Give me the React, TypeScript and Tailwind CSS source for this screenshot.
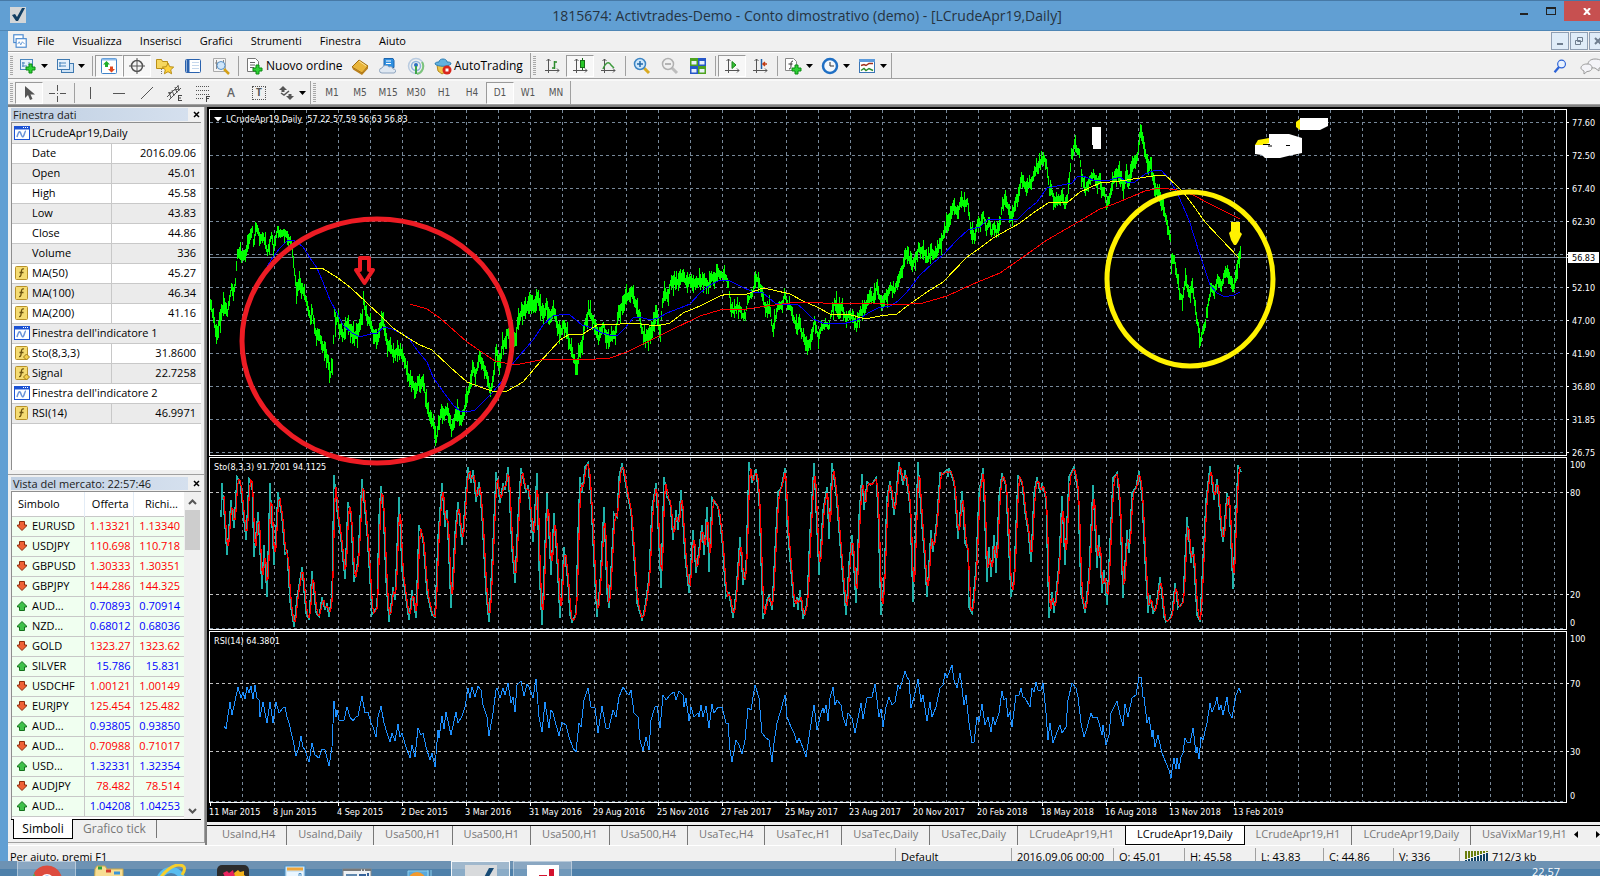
import type { ReactNode } from 'react'

type Point = [number, number]

const toPoints = (text: string): Point[] =>
  text.trim().split(/\s+/).map((pair) => pair.split(',').map(Number) as Point)

const toPath = (points: Point[]) => points.map(([x, y]) => `${x},${y}`).join(' ')

// midline of the daily bars, in pane pixels
const PRICE = toPoints(`
0,192 3,208 6,225 9,212 13,195 17,203 21,177 23,185 25,172 27,142 31,148 35,145 38,132 42,120 43,133 46,118 50,128 53,127 57,142 61,125
63,137 67,120 70,125 73,122 77,125 81,135 83,152 86,180 90,173 93,183 97,195 100,210 102,202 105,222 109,228 113,237 116,243 118,252 120,265 122,255
124,202 125,212 127,208 130,222 133,225 137,212 140,222 144,225 148,223 152,202 153,192 157,208 160,215 163,222 167,232 169,218 172,210 175,225 178,235
182,243 187,242 192,243 195,255 198,267 202,272 205,282 208,272 213,273 216,292 219,305 223,315 226,328 228,315 231,302 234,305 237,298 241,322 243,312
246,302 250,312 253,302 257,288 259,275 262,258 265,265 269,248 273,255 276,265 280,282 283,265 286,242 289,252 292,235 295,233 297,222 302,228 305,230
307,213 311,202 314,202 318,193 323,197 327,188 330,198 333,208 336,195 339,208 343,200 347,215 350,225 353,215 357,223 360,238 363,248 366,257 369,242
372,235 374,215 378,202 382,208 386,217 388,230 393,215 396,228 400,228 405,225 407,208 412,195 415,185 418,187 422,183 426,195 429,208 433,225 438,230
442,215 446,205 450,222 452,192 454,182 457,188 460,172 465,173 470,167 473,168 477,172 482,170 485,175 492,170 498,175 503,167 510,164 515,168 518,173
520,193 523,202 527,195 532,205 535,205 537,192 542,182 546,168 549,172 551,185 555,197 559,198 562,218 565,208 568,195 572,195 574,183 577,195 580,197
583,208 587,218 589,217 593,227 596,238 599,232 602,222 604,212 608,228 611,217 615,213 618,218 621,202 624,193 627,197 631,197 635,208 639,205 643,207
646,217 650,202 654,200 657,190 662,188 666,178 669,187 673,193 676,185 680,178 684,180 687,172 691,162 694,150 697,143 702,157 705,147 709,138 713,142
717,148 721,142 723,147 728,138 732,128 736,117 740,103 743,98 747,103 751,90 754,95 757,92 759,105 761,127 764,127 767,112 770,115 773,105 776,120
779,110 781,122 783,117 786,122 790,110 792,93 795,92 798,98 802,110 805,92 808,85 811,70 815,75 819,75 823,67 826,57 830,53 834,48 837,60 839,83 841,78
844,93 848,90 852,87 854,95 857,88 859,68 861,45 864,35 867,42 869,42 871,65 875,80 879,70 883,65 887,73 889,67 892,80 894,83 896,97 900,83 903,70
907,62 910,67 913,78 916,65 918,70 922,58 925,50 927,47 929,27 930,23 934,37 937,55 940,55 942,67 946,82 949,83 953,98 956,112 960,128 961,150 964,150
967,168 969,185 972,188 975,172 979,182 982,178 984,192 987,212 990,232 992,222 995,212 998,192 1001,177 1004,182 1007,168 1011,177 1014,165 1017,160
1020,172 1023,178 1026,162 1028,150 1030,145`)

const MA50 = `57,157 63,147 70,138 77,131 82,130 87,132 93,137 100,148 107,158 115,177 120,190 127,203 133,215 142,223 150,227 160,224 167,223 174,217 182,219
190,223 198,227 207,240 217,252 223,267 232,280 243,295 250,301 257,302 265,300 273,292 283,282 292,271 300,257 310,245 323,230 333,215 343,206 355,204
360,205 372,215 383,218 392,223 403,226 408,225 415,218 423,208 430,207 440,210 448,208 457,203 470,198 480,194 490,183 500,175 508,171 518,170 530,176
543,182 553,183 565,193 573,195 587,194 593,199 603,209 613,213 633,214 647,210 660,202 668,198 680,196 688,191 697,182 710,165 723,153 733,145 747,130
758,120 770,117 778,109 800,109 808,109 817,100 827,92 837,78 847,76 862,73 868,66 873,66 883,70 900,70 910,67 918,73 925,72 935,64 943,61 951,60
960,70 969,87 979,110 990,145 1000,175 1007,183 1015,187 1024,185 1030,182`

const MA100 = `100,158 112,158 128,168 140,177 157,193 172,207 183,218 198,228 210,235 222,240 240,257 257,272 273,278 285,282 297,281 313,272 330,252 350,230
358,225 373,224 387,215 410,214 423,213 447,216 460,213 473,203 490,196 510,186 517,184 537,184 553,178 563,180 580,184 593,191 607,197 620,204 638,204
655,209 670,206 687,204 697,196 717,182 733,172 757,147 770,138 783,128 810,113 823,103 838,93 858,92 870,82 890,73 910,71 930,68 943,66 955,65 966,75
973,82 983,95 995,112 1010,128 1029,148`

const MA200 = `200,194 217,199 230,208 257,232 285,251 300,254 310,254 330,250 350,249 373,250 400,248 417,242 437,232 457,222 490,206 510,200 537,199 557,196
580,193 603,192 623,194 663,193 687,195 713,193 737,186 763,174 790,163 813,147 837,130 863,115 890,99 904,94 935,81 950,78 967,80 983,85 1000,94 1030,109`

// oscillator samples, three units to a pixel; each run starts at its own x origin
const STO: [number, string][] = [
  [0, `64,200 67,98 80,315 94,150 102,235 112,82 120,95 138,270 148,88 155,95 163,320 173,185 185,418 193,285 202,440 211,98 223,345 233,125 247,205 255,315
262,300 270,455 282,530 292,440 307,350 318,490 328,510 337,362 348,490 356,500 365,440 375,480 380,460 388,500 395,430 403,75 412,180 423,270 434,388
444,155 452,200 463,395 475,330 487,88 500,250 510,390 517,495 525,480 530,470 537,200 544,108 550,160 558,390 566,515 578,410 584,450 596,142 607,360
618,450 628,510 637,420 647,505 658,225 670,270 680,430 690,470 697,495 706,500 715,260 727,100 736,230 742,180 753,475 764,250 773,155 785,285 797,120
804,50 812,100 819,60 828,155 836,95 846,200 857,430 868,515 878,280 888,65 900,160 908,98 914,120 923,52 935,300 946,400 953,200 962,55 972,100 978,130
985,105 1000,275 1010,68 1018,350 1027,525 1042,130 1052,375 1061,190 1070,330 1080,505 1093,290 1103,400 1110,495 1117,517 1127,490 1135,250 1141,80
1147,130 1155,50 1164,38 1172,150 1185,400 1192,500 1200,400 1212,170 1220,430 1228,475 1241,190 1250,200 1258,80 1267,40 1280,130 1292,190 1300,280
1310,460 1325,510 1336,470 1347,380 1355,170 1368,98 1382,415 1391,82 1400,140 1410,155 1418,270 1427,180 1434,240 1443,120 1455,320 1468,430 1478,240
1489,370 1505,225 1513,315 1521,172 1528,365 1537,145 1546,160 1555,170`],
  [1440, `127,270 138,440 146,430 158,505 168,430 179,262 190,405 198,350 206,35 217,100 227,58 237,150 250,508 260,450 268,438 275,480 285,300 295,125
304,115 314,55 322,220 335,400 342,470 350,440 353,480 359,420 370,508 380,460 390,250 403,38 417,375 428,180 440,112 446,268 457,40 467,130 480,280
497,495 507,340 517,255 528,458 537,200 545,72 553,180 561,95 573,105 587,85 594,180 603,495 612,400 620,140 631,92 642,195 656,35 668,105 675,60 690,170
698,455 714,35 725,230 733,300 742,440 752,240 760,305 770,200 779,68 790,72 800,60 803,80 808,55 822,100 833,268 845,122 855,280 863,300 868,470 877,490
887,350 897,130 908,55 920,395 928,290 933,380 941,255 948,370 956,140 965,68 978,110 992,440 1001,380 1013,75 1027,100 1035,190 1045,240 1053,335
1063,130 1070,80 1080,130 1087,100 1097,150 1106,505 1115,425 1123,490 1137,340 1145,138 1154,345 1168,80 1181,50 1193,130 1204,430 1216,490 1228,370
1240,105 1252,355 1258,255 1267,430 1273,360 1282,465 1290,280 1298,85 1312,68 1320,180 1330,445 1340,240 1346,310 1357,130 1368,110 1377,62 1387,140
1395,330 1404,490 1410,435 1418,490 1428,470 1439,380 1452,500 1457,515 1470,505`],
  [2700, `215,490 224,400 235,475 248,455 260,200 274,340 279,290 290,495 299,515 308,330 318,150 331,48 342,150 352,88 362,240 370,275 380,130 388,150
398,418 407,180 415,46 422,66`],
]

const RSI: [number, string][] = [
  [0, `73,828 79,838 91,757 97,795 113,710 122,745 129,725 134,748 142,710 147,730 153,707 160,748 166,706 172,745 177,750 181,800 188,755 200,818 211,755
218,818 229,757 238,790 249,775 256,770 262,800 268,820 278,870 288,918 297,890 302,857 308,890 314,900 328,935 337,878 345,915 356,925 366,898 376,900
388,948 395,890 403,752 408,800 412,780 418,810 432,810 440,770 450,800 458,812 468,800 475,798 487,738 495,790 505,785 513,820 520,830 528,860 535,800
544,768 552,820 560,850 570,875 576,850 584,872 593,822 601,860 607,850 618,890 629,925 635,885 645,920 654,835 663,855 669,850 678,890 690,930 697,908
706,952 713,840 718,865 725,797 731,838 737,785 752,855 768,785 775,820 785,798 795,770 805,715 809,745 815,712 826,740 833,708 842,720 850,765 860,800
868,858 878,790 887,720 892,715 900,745 908,715 915,735 923,700 933,760 939,740 944,787 952,705 962,692 972,738 980,702 987,712 1000,745 1009,688
1018,800 1027,845 1035,757 1046,835 1052,780 1060,790 1077,858 1086,815 1097,825 1108,860 1120,895 1127,905 1137,820 1143,830 1153,750 1164,715 1172,770
1184,775 1193,850 1207,768 1218,835 1228,835 1240,780 1247,800 1257,740 1268,710 1280,730 1287,735 1293,720 1303,790 1313,800 1320,870 1330,903 1339,860
1346,900 1353,810 1365,770 1371,768 1380,835 1390,735 1398,750 1410,735 1422,725 1428,750 1438,722 1448,735 1452,770 1458,745 1466,812 1473,770 1482,800
1493,790 1498,800 1504,765 1508,800 1518,768 1526,835 1535,762 1543,790 1553,770`],
  [1440, `127,770 137,820 143,820 150,900 157,935 167,870 177,885 186,912 195,870 203,775 212,780 225,705 236,745 246,850 258,865 268,870 275,935 283,880
292,820 302,780 314,735 322,800 333,830 343,850 350,880 357,865 368,895 377,922 388,860 395,800 402,765 411,840 422,790 428,775 433,790 438,765 444,812
450,745 459,712 465,765 472,750 482,765 488,800 497,828 505,790 515,805 525,850 537,790 544,760 549,808 560,745 575,740 584,703 592,750 598,800 603,778
608,830 617,770 627,740 635,765 645,755 654,705 660,718 674,662 680,680 688,690 694,775 705,730 714,688 723,755 730,735 741,812 749,755 757,800 768,770
780,715 788,705 795,670 802,685 810,660 817,645 822,690 832,715 839,668 844,690 851,765 857,735 866,820 875,880 882,875 890,800 897,815 906,762 915,825
923,800 932,845 938,800 946,825 957,790 965,722 972,750 978,745 984,800 990,785 997,830 1007,735 1018,735 1022,715 1030,740 1036,745 1049,770 1057,715
1063,725 1068,697 1075,720 1083,720 1090,700 1097,790 1105,870 1111,820 1120,880 1130,845 1140,825 1146,850 1157,830 1165,750 1177,700 1187,715 1195,740
1203,820 1213,860 1222,835 1233,790 1240,805 1252,800 1258,820 1266,855 1270,825 1278,885 1287,855 1293,790 1303,770 1312,752 1320,795 1329,828 1336,762
1344,800 1355,745 1367,735 1377,680 1382,680 1388,740 1393,740 1400,820 1408,800 1415,860 1420,840 1425,890 1434,855 1447,910 1458,940 1466,960 1472,985`],
  [2700, `217,960 222,925 227,958 231,925 236,958 242,920 250,910 254,865 260,875 270,880 278,835 288,910 292,890 298,928 303,860 308,870 320,820 331,760
337,785 345,765 351,742 358,780 363,765 368,795 380,740 388,785 397,805 408,735 418,715 422,728`],
]

const joinRuns = (runs: [number, string][], shiftY: number): Point[] =>
  runs.flatMap(([origin, text]) =>
    toPoints(text).map(([x, y]): Point => [Math.round((x + origin) / 3) - 10, Math.round(y / 3) - shiftY]),
  )

const valueAt = (points: Point[], x: number) => {
  const i = points.findIndex(([px]) => px >= x)
  if (i <= 0) return points[i === 0 ? 0 : points.length - 1][1]
  const [x0, y0] = points[i - 1]
  const [x1, y1] = points[i]
  return y0 + ((y1 - y0) * (x - x0)) / (x1 - x0 || 1)
}

const hash = (n: number) => {
  const v = Math.sin(n * 12.9898) * 43758.5453
  return v - Math.floor(v)
}

const priceBars = () => {
  let d = ''
  for (let x = 0; x <= 1030; x++) {
    const mid = valueAt(PRICE, x)
    const reach = x > 455 && x < 720 ? 2 : 3
    const high = Math.round(mid - reach - hash(x) * hash(x + 7) * 13)
    const low = Math.round(mid + reach + hash(x + 31) * hash(x + 3) * 13)
    d += `M${x} ${high}V${low}`
  }
  return d
}

const smooth = (points: Point[]): Point[] => {
  const result: Point[] = []
  for (let x = points[0][0] + 2; x <= 1030; x++) {
    const y = (valueAt(points, x - 2) + valueAt(points, x - 1) + valueAt(points, x)) / 3
    result.push([x, Math.round(y)])
  }
  return result
}

const stochastic = joinRuns(STO, 8)
const rsi = joinRuns(RSI, 182)

const priceScale = ['77.60', '72.50', '67.40', '62.30', '', '52.10', '47.00', '41.90', '36.80', '31.85', '26.75']

const dates = [
  '11 Mar 2015', '8 Jun 2015', '4 Sep 2015', '2 Dec 2015', '3 Mar 2016', '31 May 2016', '29 Aug 2016', '25 Nov 2016', '27 Feb 2017',
  '25 May 2017', '23 Aug 2017', '20 Nov 2017', '20 Feb 2018', '18 May 2018', '16 Aug 2018', '13 Nov 2018', '13 Feb 2019',
]

const dataRows: { label: string; value?: string; icon?: 'window' | 'fx' | 'fxd' }[] = [
  { label: 'LCrudeApr19,Daily', icon: 'window' },
  { label: 'Date', value: '2016.09.06' },
  { label: 'Open', value: '45.01' },
  { label: 'High', value: '45.58' },
  { label: 'Low', value: '43.83' },
  { label: 'Close', value: '44.86' },
  { label: 'Volume', value: '336' },
  { label: 'MA(50)', value: '45.27', icon: 'fx' },
  { label: 'MA(100)', value: '46.34', icon: 'fx' },
  { label: 'MA(200)', value: '41.16', icon: 'fx' },
  { label: "Finestra dell'indicatore 1", icon: 'window' },
  { label: 'Sto(8,3,3)', value: '31.8600', icon: 'fxd' },
  { label: 'Signal', value: '22.7258', icon: 'fxd' },
  { label: "Finestra dell'indicatore 2", icon: 'window' },
  { label: 'RSI(14)', value: '46.9971', icon: 'fx' },
]

const quotes: [string, string, string, boolean][] = [
  ['EURUSD', '1.13321', '1.13340', false],
  ['USDJPY', '110.698', '110.718', false],
  ['GBPUSD', '1.30333', '1.30351', false],
  ['GBPJPY', '144.286', '144.325', false],
  ['AUD...', '0.70893', '0.70914', true],
  ['NZD...', '0.68012', '0.68036', true],
  ['GOLD', '1323.27', '1323.62', false],
  ['SILVER', '15.786', '15.831', true],
  ['USDCHF', '1.00121', '1.00149', false],
  ['EURJPY', '125.454', '125.482', false],
  ['AUD...', '0.93805', '0.93850', true],
  ['AUD...', '0.70988', '0.71017', false],
  ['USD...', '1.32331', '1.32354', true],
  ['AUDJPY', '78.482', '78.514', false],
  ['AUD...', '1.04208', '1.04253', true],
]

const chartTabs = [
  'UsaInd,H4', 'UsaInd,Daily', 'Usa500,H1', 'Usa500,H1', 'Usa500,H1', 'Usa500,H4', 'UsaTec,H4', 'UsaTec,H1', 'UsaTec,Daily', 'UsaTec,Daily',
  'LCrudeApr19,H1', 'LCrudeApr19,Daily', 'LCrudeApr19,H1', 'LCrudeApr19,Daily', 'UsaVixMar19,H1',
]

function Icon({ children, size = 18 }: { children: ReactNode; size?: number }) {
  return (
    <svg width={size} height={size} viewBox="0 0 18 18" fill="none" className="shrink-0" aria-hidden="true">
      {children}
    </svg>
  )
}

function ToolButton({ label, pressed, caret, children }: { label: string; pressed?: boolean; caret?: boolean; children: ReactNode }) {
  return (
    <button
      type="button"
      aria-label={label}
      className={`flex h-[22px] items-center justify-center border ${caret ? 'w-[37px] gap-1' : 'w-7'} ${
        pressed ? 'border-t-[#9a9a9a] border-l-[#9a9a9a] border-r-white border-b-white bg-[#f7f7f7]' : 'border-transparent'
      }`}
    >
      {children}
      {caret && <Caret />}
    </button>
  )
}

function Caret() {
  return (
    <svg width="7" height="4" viewBox="0 0 7 4" className="shrink-0" aria-hidden="true">
      <path d="M0 0H7L3.5 4Z" fill="#000" />
    </svg>
  )
}

function Separator() {
  return (
    <div className="flex w-[6px] justify-center">
      <div className="h-5 w-px bg-[#a0a0a0]" />
    </div>
  )
}

function Gripper() {
  return <div className="mx-[2px] h-5 w-[3px] bg-[repeating-linear-gradient(#a8a8a8_0_1px,#f0f0f0_1px_2px)]" />
}

const Axes = () => <path d="M5.500 2V16M2 13.500H16M3.500 4L5.500 2L7.500 4M14 11.500L16 13.500L14 15.500" stroke="#555" />

const Plus = ({ x, y }: { x: number; y: number }) => (
  <path d={`M${x} ${y}h3v3h3v3h-3v3h-3v-3h-3v-3h3z`} fill="#2fd135" stroke="#0a8a12" />
)

function MainToolbar() {
  return (
    <div className="flex h-[27px] items-stretch border-t border-b border-t-white border-b-[#a0a0a0]">
      <div className="flex items-center border-r border-[#a0a0a0]">
        <Gripper />
        <ToolButton label="Nuovo grafico" caret>
          <Icon>
            <rect x="1.5" y="2.5" width="12" height="10" fill="#e6f1fb" stroke="#4a86bd" />
            <path d="M4 5v5M3 6h3M10 5v3M3 9h5" stroke="#4a86bd" />
            <Plus x={10} y={7} />
          </Icon>
        </ToolButton>
        <ToolButton label="Profili" caret>
          <Icon>
            <rect x="5.5" y="6.5" width="12" height="9" fill="#cfe3f5" stroke="#3f79b0" />
            <rect x="1.5" y="2.5" width="12" height="10" fill="#e6f1fb" stroke="#3f79b0" />
            <path d="M4 5v5M3 6h7M3 9h7" stroke="#4a86bd" />
          </Icon>
        </ToolButton>
        <Separator />
        <ToolButton label="Vista del mercato" pressed>
          <Icon>
            <rect x="1.5" y="1.5" width="15" height="15" rx="1" fill="#fff" stroke="#3f83c9" />
            <path d="M2 2.5h14" stroke="#8dbbea" strokeWidth="2" />
            <path d="M6.500 4l3.500 3.500H8v2.500H5V7.500H3z" fill="#1fae2a" />
            <path d="M11.500 15.500l-3.500-3.500h2V9.500h3V12h2z" fill="#e2471d" />
          </Icon>
        </ToolButton>
        <ToolButton label="Finestra dati" pressed>
          <Icon>
            <circle cx="9" cy="9" r="5.500" stroke="#555" strokeWidth="1.500" />
            <path d="M9 1v16M1 9h16" stroke="#555" />
          </Icon>
        </ToolButton>
        <ToolButton label="Navigatore">
          <Icon>
            <path d="M.5 2.500h5l1 2h5v7H.5z" fill="#f6d75f" stroke="#b98f17" />
            <path d="M5.500 12v5" stroke="#777" strokeDasharray="1 1" />
            <path d="M12 6l1.700 3.700 4 .4-3 2.700.9 4L12 14.700 8.400 16.800l.9-4-3-2.700 4-.4z" fill="#ffd23c" stroke="#b98f17" />
          </Icon>
        </ToolButton>
        <ToolButton label="Terminale">
          <Icon>
            <rect x="1.500" y="2.500" width="15" height="13" rx="1" fill="#fff" stroke="#2a62ae" />
            <path d="M4 3v12" stroke="#2a62ae" strokeWidth="3" />
            <path d="M8 5.500h7M8 8.500h7M8 11.500h7" stroke="#c5d7ec" />
          </Icon>
        </ToolButton>
        <ToolButton label="Tester strategia">
          <Icon>
            <path d="M1.500 1.500h12v13h-12z" fill="#f4f4f4" stroke="#aaa" />
            <path d="M4.500 3v9M11.500 3v4M3 6h3" stroke="#888" />
            <circle cx="9" cy="8.500" r="4" fill="#cfe6fa" stroke="#5a93c8" />
            <path d="M12 12l5 5" stroke="#d4a017" strokeWidth="2.500" />
          </Icon>
        </ToolButton>
        <Separator />
        <button type="button" className="flex h-[22px] w-[105px] items-center gap-[3px] pl-1 text-[12px]">
          <Icon>
            <path d="M2.500 1.500h8l3 3v10h-11z" fill="#fff" stroke="#777" />
            <path d="M5 5.500h5M5 8h5M5 10.500h4" stroke="#666" />
            <Plus x={11} y={8} />
          </Icon>
          Nuovo ordine
        </button>
        <ToolButton label="MetaEditor">
          <Icon>
            <path d="M1 10L8 3l9 6-6 7z" fill="#e9b53a" stroke="#a06d10" />
            <path d="M1 10l1 2.500 9 5.500 6-6.500V9l-6 7z" fill="#b97f1b" />
            <path d="M8 4l7 5" stroke="#fbe59a" />
          </Icon>
        </ToolButton>
        <ToolButton label="MQL5 Community">
          <Icon>
            <path d="M5 1.500h9l1 2v7H5z" fill="#2e8fe0" stroke="#1c64ad" />
            <path d="M7 4h5M7 6.500h5" stroke="#fff" />
            <path d="M3 16a2.500 2.500 0 0 1 0-5 4 4 0 0 1 7-1 3 3 0 0 1 4 2 2 2 0 0 1 1 4z" fill="#dfe8f2" stroke="#8da4bf" />
          </Icon>
        </ToolButton>
        <ToolButton label="Segnali">
          <Icon>
            <circle cx="9" cy="9" r="7.500" stroke="#b9cbe0" strokeWidth="1.500" />
            <circle cx="9" cy="9" r="4.500" stroke="#8fb4dc" strokeWidth="1.500" />
            <path d="M10 17a8 8 0 0 0 5-12" stroke="#7cc47c" strokeWidth="2" />
            <circle cx="9" cy="8" r="2" fill="#2c70c0" />
            <path d="M9 9v8" stroke="#3fa548" strokeWidth="2" />
          </Icon>
        </ToolButton>
        <button type="button" className="flex h-[22px] w-[100px] items-center gap-[2px] pl-1 text-[12px]">
          <Icon>
            <path d="M3 8h11l-1 6-5 3-4-3z" fill="#f0c54a" stroke="#b28a1c" />
            <path d="M1 7c0-2 3-2 4-2 0-4 8-4 8 0 2 0 4 0 4 2-3 3-13 3-16 0z" fill="#62b2e0" stroke="#2f7fb5" />
            <circle cx="13" cy="13" r="4.500" fill="#d9261c" />
            <rect x="11.500" y="11.500" width="3" height="3" fill="#fff" />
          </Icon>
          AutoTrading
        </button>
      </div>
      <div className="flex items-center border-r border-[#a0a0a0]">
        <Gripper />
        <ToolButton label="Grafico a barre">
          <Icon>
            <Axes />
            <path d="M11.500 4v8M9 11h2M12 5h2" stroke="#2c8a2c" strokeWidth="1.500" />
          </Icon>
        </ToolButton>
        <ToolButton label="Candele" pressed>
          <Icon>
            <Axes />
            <path d="M11.500 1v12" stroke="#176b17" />
            <rect x="9.500" y="3.500" width="4" height="7" fill="#27c627" stroke="#176b17" />
          </Icon>
        </ToolButton>
        <ToolButton label="Linea">
          <Icon>
            <Axes />
            <path d="M4 12c3-7 6-8 8-4l3 3" stroke="#3c9a3c" strokeWidth="1.500" />
          </Icon>
        </ToolButton>
        <Separator />
        <ToolButton label="Zoom avanti">
          <Icon>
            <path d="M11 11l5 5" stroke="#d9aa22" strokeWidth="3" />
            <circle cx="7" cy="7" r="5.500" fill="#cfe8fb" stroke="#3d85c4" strokeWidth="1.500" />
            <path d="M4 7h6M7 4v6" stroke="#2469ab" strokeWidth="1.500" />
          </Icon>
        </ToolButton>
        <ToolButton label="Zoom indietro">
          <Icon>
            <path d="M11 11l5 5" stroke="#bdbdbd" strokeWidth="3" />
            <circle cx="7" cy="7" r="5.500" fill="#f0f0f0" stroke="#b0b0b0" strokeWidth="1.500" />
            <path d="M4 7h6" stroke="#a0a0a0" strokeWidth="1.500" />
          </Icon>
        </ToolButton>
        <ToolButton label="Affianca finestre">
          <Icon>
            <path d="M1 1h8v8H1zM9 9h8v8H9z" fill="#4ea31f" />
            <path d="M9 1h8v8H9zM1 9h8v8H1z" fill="#2657c8" />
            <path d="M2.500 4h5v3.500h-5zM10.500 4h5v3.500h-5zM2.500 12h5v3.500h-5zM10.500 12h5v3.500h-5z" fill="#e8f0fa" />
          </Icon>
        </ToolButton>
        <Separator />
        <ToolButton label="Scorrimento automatico" pressed>
          <Icon>
            <Axes />
            <path d="M9 4.500l4 3.500-4 3.500z" fill="#35c235" stroke="#1b851b" />
          </Icon>
        </ToolButton>
        <ToolButton label="Sposta grafico">
          <Icon>
            <Axes />
            <path d="M10.500 2v10" stroke="#1e5fa8" strokeWidth="1.500" />
            <path d="M16 7h-4M14 5l-2 2 2 2" stroke="#c03a12" strokeWidth="1.500" />
          </Icon>
        </ToolButton>
        <Separator />
        <ToolButton label="Indicatori" caret>
          <Icon>
            <path d="M1.500 1.500h8l3 3v9h-11z" fill="#fff" stroke="#888" />
            <path d="M9 4c-2 0-2 2-2 4s0 4-2 4M4.500 7h4" stroke="#333" />
            <Plus x={11} y={8} />
          </Icon>
        </ToolButton>
        <ToolButton label="Periodi" caret>
          <Icon>
            <circle cx="9" cy="9" r="7" fill="#f4f8fc" stroke="#1f6fc4" strokeWidth="2.500" />
            <path d="M9 5v4h4" stroke="#333" />
          </Icon>
        </ToolButton>
        <ToolButton label="Modelli" caret>
          <Icon>
            <rect x="1.500" y="2.500" width="15" height="13" fill="#fff" stroke="#3a75b5" />
            <path d="M1 3.500h16" stroke="#5c9bdc" strokeWidth="3" />
            <path d="M3 8.500l3-1 2 1 3-2 4 0" stroke="#a0301c" strokeWidth="1.500" />
            <path d="M3 13.500l3-2 2 2 3-2 4 2" stroke="#2c8a2c" strokeWidth="1.500" />
          </Icon>
        </ToolButton>
      </div>
      <div className="flex flex-1 items-center justify-end gap-[13px] overflow-hidden">
        <button type="button" aria-label="Cerca">
          <Icon size={14}>
            <path d="M8 10l-6 7" stroke="#2c62d6" strokeWidth="3" />
            <circle cx="11" cy="6.500" r="5" fill="#eaf3ff" stroke="#2c62d6" strokeWidth="1.500" />
          </Icon>
        </button>
        <button type="button" aria-label="Chat" className="-mr-1">
          <svg width="24" height="18" viewBox="0 0 24 18" fill="#f4f4f8" stroke="#999" aria-hidden="true">
            <path d="M15 2c5 0 8 2 8 5s-2 4-4 4l0 3-4-3c-5 0-7-2-7-4s2-5 7-5z" />
            <path d="M7 7c4 0 5 2 5 4s-2 3.500-5 3.500L4 17l0-3c-2-1-3-2-3-3 0-2 2-4 6-4z" />
          </svg>
        </button>
      </div>
    </div>
  )
}

function LineToolbar() {
  return (
    <div className="flex h-[26px] items-stretch border-t-2 border-b border-t-[#f8f8f8] border-b-[#a0a0a0]">
      <div className="flex items-center border-r border-[#a0a0a0]">
        <Gripper />
        <ToolButton label="Cursore" pressed>
          <Icon>
            <path d="M5 2v12l3-3 2 5 2.500-1-2-4.500H15z" fill="#555" />
          </Icon>
        </ToolButton>
        <ToolButton label="Mirino">
          <Icon>
            <path d="M9.500 1v6M9.500 12v6M1 9.500h6M12 9.500h6M9 9.500h1" stroke="#555" />
          </Icon>
        </ToolButton>
        <Separator />
        <ToolButton label="Linea verticale">
          <Icon>
            <path d="M8.500 3v12" stroke="#555" />
          </Icon>
        </ToolButton>
        <ToolButton label="Linea orizzontale">
          <Icon>
            <path d="M3 9.500h12" stroke="#555" />
          </Icon>
        </ToolButton>
        <ToolButton label="Trendline">
          <Icon>
            <path d="M3 15L15 3" stroke="#555" />
          </Icon>
        </ToolButton>
        <ToolButton label="Canale equidistante">
          <Icon>
            <path d="M1 13L12 2M3 16L15 4M3 8l2 6M6 6l2 6M9 3l2 6M12 1l1 6M2 9l4-1M8 6l5-1" stroke="#555" />
            <path d="M12.500 11.500v5M12 11.500h4M12 14h3M12 16.500h4" stroke="#444" />
          </Icon>
        </ToolButton>
        <ToolButton label="Fibonacci">
          <Icon>
            <path d="M2 2.500h14M2 6.500h14M2 10.500h14M2 14.500h8" stroke="#555" strokeDasharray="1 1" />
            <path d="M12.500 12v6M12 12.500h4M12 14.500h3" stroke="#444" />
          </Icon>
        </ToolButton>
        <ToolButton label="Testo">
          <span className="text-[12px] font-semibold text-[#666]">A</span>
        </ToolButton>
        <ToolButton label="Etichetta di testo">
          <span className="flex size-[14px] items-center justify-center border border-dotted border-[#555] text-[10px] font-bold text-[#555]">T</span>
        </ToolButton>
        <ToolButton label="Frecce" caret>
          <Icon>
            <path d="M6 2l4 4H7.500v2h-3V6H2zM13 16l-4-4h2.500v-2h3v2H17z" fill="#555" />
            <path d="M4 9l3 2 5-4" stroke="#555" strokeWidth="1.500" />
          </Icon>
        </ToolButton>
      </div>
      <div className="flex items-center border-r border-[#a0a0a0]">
        <Gripper />
        {['M1', 'M5', 'M15', 'M30', 'H1', 'H4', 'D1', 'W1', 'MN'].map((period) => (
          <ToolButton key={period} label={period} pressed={period === 'D1'}>
            <span className="font-['DejaVu_Sans_Condensed','DejaVu_Sans',sans-serif] text-[10px] text-[#555]">{period}</span>
          </ToolButton>
        ))}
      </div>
    </div>
  )
}

function RowIcon({ kind }: { kind: 'window' | 'fx' | 'fxd' }) {
  if (kind === 'window') {
    return (
      <svg width="16" height="14" viewBox="0 0 16 14" fill="none" aria-hidden="true">
        <rect x=".5" y=".5" width="15" height="13" fill="#fff" stroke="#1c53d4" />
        <path d="M0 2h16" stroke="#1c53d4" strokeWidth="3" />
        <path d="M9 1.500h1M11 1.500h1M13 1.500h1" stroke="#fff" />
        <path d="M3 11c2-7 3-6 4-3s2 4 3 1 1-4 2-4" stroke="#6d95d8" strokeWidth="1.500" />
      </svg>
    )
  }
  return (
    <svg width="16" height="14" viewBox="0 0 16 14" fill="none" aria-hidden="true">
      <rect x="1.500" y=".5" width="12" height="13" rx="1" fill="#f5dc73" stroke="#b8912a" />
      <path d="M10 3c-2-.6-2.500.8-2.700 3S7 11 5 10.700M5.500 6.500h4" stroke="#6d5410" strokeWidth="1.300" />
      {kind === 'fxd' && <path d="M12.500 8l3 3-3 3-3-3z" fill="#f3cf4a" stroke="#9c7a1c" />}
    </svg>
  )
}

function PanelHeader({ title }: { title: string }) {
  return (
    <div className="flex h-[13px] items-center">
      <h2 className="flex-1 bg-linear-to-r from-[#bfcfe2] to-[#d5e0ee] pl-[2px] text-[11px] leading-[13px] text-[#1a1a1a]">{title}</h2>
      <button type="button" aria-label={`Chiudi ${title}`} className="flex w-[13px] justify-end pr-px">
        <svg width="7" height="7" viewBox="0 0 7 7" aria-hidden="true">
          <path d="M1 1l5 5M6 1L1 6" stroke="#000" strokeWidth="1.500" />
        </svg>
      </button>
    </div>
  )
}

function DataWindow() {
  return (
    <section className="h-[368px] border-r border-b border-[#a0a0a0] px-[3px] pt-px">
      <PanelHeader title="Finestra dati" />
      <div className="mt-px h-[348px] border-t border-l border-[#8e8e8e] bg-white">
        <table className="w-full table-fixed border-collapse text-[11px] leading-[18px]">
          <colgroup>
            <col />
            <col className="w-[90px]" />
          </colgroup>
          <tbody>
            {dataRows.map((row, i) => (
              <tr key={row.label} className={`h-5 border-b border-[#c8c8c8] ${i % 2 ? 'bg-white' : 'bg-[#ebebeb]'}`}>
                <th scope="row" colSpan={row.value ? 1 : 2} className="p-0 text-left font-normal">
                  <div className="flex items-center gap-[2px] pl-[2px] whitespace-nowrap">
                    <span className="w-4">{row.icon && <RowIcon kind={row.icon} />}</span>
                    {row.label}
                  </div>
                </th>
                {row.value && <td className="border-l border-[#c8c8c8] p-0 pr-[5px] text-right">{row.value}</td>}
              </tr>
            ))}
          </tbody>
        </table>
      </div>
    </section>
  )
}

function QuoteArrow({ up }: { up: boolean }) {
  return (
    <svg width="12" height="12" viewBox="0 0 12 12" aria-hidden="true">
      {up ? (
        <path d="M6 1.500l4.500 4.500v1H8.500v3.500h-5V7h-2V6z" fill="#3fc04a" stroke="#14701c" />
      ) : (
        <path d="M6 10.500L1.500 6V5h2V1.500h5V5h2v1z" fill="#ee6136" stroke="#8d2b0c" />
      )}
    </svg>
  )
}

function MarketWatch() {
  return (
    <section className="mb-[2px] flex flex-1 flex-col border-r border-b border-[#a0a0a0] px-[3px] pt-[2px]">
      <PanelHeader title="Vista del mercato: 22:57:46" />
      <div className="mt-px flex h-[328px] overflow-hidden border-t border-l border-[#8e8e8e] bg-white">
        <div className="flex-1 overflow-hidden">
          <table className="w-full table-fixed border-collapse text-[11px] leading-[18px]">
            <thead>
              <tr className="h-6 border-b border-[#c8c8c8]">
                <th className="p-0 pl-[6px] text-left font-normal">Simbolo</th>
                <th className="w-[49px] border-l border-[#e3ecf6] p-0 pr-1 text-right font-normal">Offerta</th>
                <th className="w-[51px] border-l border-[#e3ecf6] p-0 pr-[6px] text-right font-normal">Richi...</th>
              </tr>
            </thead>
            <tbody>
              {quotes.map(([symbol, bid, ask, up], i) => (
                <tr key={i} className="h-5 border-b border-[#c8c8c8] bg-[#f0fff0]">
                  <th scope="row" className="p-0 font-normal">
                    <div className="flex items-center gap-1 pl-1">
                      <QuoteArrow up={up} />
                      {symbol}
                    </div>
                  </th>
                  <td className={`border-l border-[#c8c8c8] p-0 pr-[2px] text-right ${up ? 'text-[#0000ff]' : 'text-[#ff0000]'}`}>{bid}</td>
                  <td className={`border-l border-[#c8c8c8] p-0 pr-1 text-right ${up ? 'text-[#0000ff]' : 'text-[#ff0000]'}`}>{ask}</td>
                </tr>
              ))}
            </tbody>
          </table>
        </div>
        <div className="flex w-[17px] flex-col items-center bg-[#f0f0f0] pt-1 pb-[2px]">
          <svg width="9" height="12" viewBox="0 0 9 12" fill="none" stroke="#555" strokeWidth="2" aria-hidden="true">
            <path d="M1 8l3.500-3.500L8 8" />
          </svg>
          <div className="mt-[2px] h-10 w-[15px] bg-[#cdcdcd]" />
          <svg width="9" height="12" viewBox="0 0 9 12" fill="none" stroke="#555" strokeWidth="2" className="mt-auto" aria-hidden="true">
            <path d="M1 4l3.500 3.500L8 4" />
          </svg>
        </div>
      </div>
      <div className="flex h-5 items-start border-t border-black pl-[2px] text-[12px] leading-[18px]">
        <button type="button" className="-mt-px h-5 w-[60px] border border-t-0 border-black bg-white">
          Simboli
        </button>
        <button type="button" className="border-r border-[#777] px-[10px] text-[#777]">
          Grafico tick
        </button>
      </div>
    </section>
  )
}

function VerticalGrid() {
  return (
    <>
      {Array.from({ length: 60 }, (_, i) => (
        <line key={i} x1={32.5 + i * 32} x2={32.5 + i * 32} y1="0" y2="100%" stroke="#778899" strokeDasharray="3 3" />
      ))}
    </>
  )
}

function Level({ y, color = '#778899' }: { y: number; color?: string }) {
  return <line x1="0" x2="100%" y1={y + 0.5} y2={y + 0.5} stroke={color} strokeDasharray="3 3" />
}

const chartText = "font-['DejaVu_Sans_Condensed','DejaVu_Sans',sans-serif] text-[9px]"

function Pane({ title, caret, className, children, axis }: { title: string; caret?: boolean; className: string; children: ReactNode; axis: [string, number][] }) {
  return (
    <div className={`flex ${className}`}>
      <div className="relative min-w-0 flex-1 border border-white">
        <svg width="100%" height="100%" shapeRendering="crispEdges" className="block">
          {children}
        </svg>
        <div className={`absolute top-[3px] left-1 flex items-center gap-1 leading-[12px] whitespace-pre text-white ${chartText}`}>
          {caret && (
            <svg width="8" height="5" viewBox="0 0 8 5" aria-hidden="true">
              <path d="M0 0H8L4 4.500Z" fill="#fff" />
            </svg>
          )}
          {title}
        </div>
      </div>
      <svg width="33" height="100%" className={`shrink-0 overflow-visible ${chartText}`}>
        {axis.map(([label, y]) => (
          <g key={label}>
            {label !== '100' && label !== '0' && <path d={`M0 ${y + 0.5}h2`} stroke="#fff" />}
            {label === '56.83' && <rect x="1" y={y - 5} width="31" height="11" fill="#fff" />}
            <text x={label.length > 3 ? 5 : 3} y={y + 4} fill={label === '56.83' ? '#000' : '#fff'}>
              {label}
            </text>
          </g>
        ))}
      </svg>
    </div>
  )
}

function Annotations() {
  return (
    <svg className="pointer-events-none absolute inset-0 size-full" fill="none" aria-hidden="true">
      <ellipse cx="170" cy="234" rx="135" ry="122" stroke="#ed1c24" strokeWidth="5" />
      <path d="M153 151v12h-4l8.500 13 8.500-13h-4v-12z" fill="#000" stroke="#ed1c24" strokeWidth="4" strokeLinejoin="round" />
      <ellipse cx="983" cy="172" rx="83" ry="87" stroke="#fff200" strokeWidth="5" />
      <path d="M1024 115h9v10l2 2-4 8-2 3h-2l-3-5-2-7 2-2z" fill="#fff200" />
      <path d="M885 20h9v22h-8v-4h-1z" fill="#fff" />
      <path d="M1093 12l-4 3v5l4 3h16l5-3z" fill="#fff200" />
      <path d="M1093 11h28v8l-8 4h-20z" fill="#fff" />
      <path d="M1048 38l3-5 11-2v7z" fill="#fff200" />
      <path d="M1062 27h20l13 4v15l-14 3-8 2h-15l-3-3-7-1v-9h8l6-2z" fill="#fff" />
      <path d="M1056 37.500h7M1061 39h4M1079 38.500h4" stroke="#000" />
    </svg>
  )
}

function Chart() {
  return (
    <main className="relative flex flex-col bg-black pt-[2px] pl-[2px]">
      <Pane
        title="LCrudeApr19,Daily  57.22 57.59 56.63 56.83"
        caret
        className="h-[347px]"
        axis={[...priceScale.map((label, i): [string, number] => [label, 13 + i * 33]), ['56.83', 148]]}
      >
        <VerticalGrid />
        {priceScale.map((_, i) => (
          <Level key={i} y={12 + i * 33} />
        ))}
        <line x1="0" x2="100%" y1="147.5" y2="147.5" stroke="#778899" />
        <path d={priceBars()} transform="translate(.5 0)" stroke="#00ff00" />
        <polyline points={MA50} fill="none" stroke="#0000ff" />
        <polyline points={MA100} fill="none" stroke="#ffff00" />
        <polyline points={MA200} fill="none" stroke="#ff0000" />
      </Pane>
      <Pane title="Sto(8,3,3) 91.7201 94.1125" className="mt-px h-[173px]" axis={[['100', 7], ['80', 35], ['20', 137], ['0', 165]]}>
        <VerticalGrid />
        <Level y={34} color="#c0c0c0" />
        <Level y={136} color="#c0c0c0" />
        <Level y={170} />
        <polyline points={toPath(stochastic)} fill="none" stroke="#20b2aa" strokeWidth="1.400" />
        <polyline points={toPath(smooth(stochastic))} fill="none" stroke="#ff0000" strokeWidth="1.200" />
      </Pane>
      <Pane title="RSI(14) 64.3801" className="mt-px h-[172px]" axis={[['100', 7], ['70', 52], ['30', 120], ['0', 164]]}>
        <VerticalGrid />
        <Level y={51} color="#c0c0c0" />
        <Level y={119} color="#c0c0c0" />
        <Level y={169} />
        <polyline points={toPath(rsi)} fill="none" stroke="#1e90ff" />
      </Pane>
      <svg width="100%" height="19" className={`block ${chartText}`}>
        {dates.map((date, i) => (
          <g key={date}>
            <path d={`M${1.5 + i * 64} 0v3`} stroke="#fff" />
            <text x={i * 64} y="12" fill="#fff">
              {date}
            </text>
          </g>
        ))}
      </svg>
      <Annotations />
    </main>
  )
}

function ChartTabs() {
  return (
    <nav className="flex h-[23px] items-start border-t border-[#f0f0f0] bg-[#f0f0f0] pt-[2px] text-[11px]" aria-label="Grafici aperti">
      <div className="flex h-[20px] min-w-0 flex-1 overflow-hidden border-t border-black pl-1 leading-[18px]">
        {chartTabs.map((tab, i) => (
          <a
            key={i}
            href="#"
            className={`-mt-px shrink-0 px-[11px] whitespace-nowrap ${
              i === 11 ? 'border border-t-0 border-black bg-white text-black' : 'text-[#777]'
            } ${i < 10 || i === 12 || i === 13 ? 'border-r border-r-[#777]' : ''}`}
          >
            {tab}
          </a>
        ))}
      </div>
      <div className="flex h-[18px] w-[26px] items-center justify-between border-t border-black">
        <button type="button" aria-label="Scorri a sinistra">
          <svg width="4" height="7" viewBox="0 0 4 7"><path d="M4 0v7L0 3.500z" /></svg>
        </button>
        <button type="button" aria-label="Scorri a destra">
          <svg width="4" height="7" viewBox="0 0 4 7"><path d="M0 0v7l4-3.500z" /></svg>
        </button>
      </div>
    </nav>
  )
}

function StatusBar() {
  return (
    <footer className="flex flex-1 items-start border-t border-white bg-[#f0f0f0] pt-[2px] pl-[2px] text-[11px] leading-[18px] whitespace-nowrap">
      <p className="flex-1">Per aiuto, premi F1</p>
      <p className="w-[116px] border-l border-[#a0a0a0] pl-[5px]">Default</p>
      <p className="w-[102px] border-l border-[#a0a0a0] pl-[5px]">2016.09.06 00:00</p>
      <p className="w-[71px] border-l border-[#a0a0a0] pl-[5px]">O: 45.01</p>
      <p className="w-[71px] border-l border-[#a0a0a0] pl-[5px]">H: 45.58</p>
      <p className="w-[68px] border-l border-[#a0a0a0] pl-[5px]">L: 43.83</p>
      <p className="w-[70px] border-l border-[#a0a0a0] pl-[5px]">C: 44.86</p>
      <p className="w-[66px] border-l border-[#a0a0a0] pl-[5px]">V: 336</p>
      <p className="flex w-[141px] items-center gap-1 border-l border-[#a0a0a0] pl-[5px]">
        <svg width="23" height="14" viewBox="0 0 23 14" shapeRendering="crispEdges" aria-hidden="true">
          {Array.from({ length: 8 }, (_, i) => (
            <g key={i}>
              <rect x={i * 3} y="1" width="2" height={8 - i} fill="#6b7f0e" />
              <rect x={i * 3} y={10 - i} width="2" height={4 + i} fill="#0d3f63" />
            </g>
          ))}
        </svg>
        712/3 kb
      </p>
    </footer>
  )
}

function TaskButton({ label, active, children }: { label: string; active?: 'strong' | 'soft'; children: ReactNode }) {
  return (
    <button
      type="button"
      aria-label={label}
      className={`flex h-10 w-[59px] justify-center border pt-[2px] ${
        active === 'strong' ? 'border-white/90 bg-white/35' : active === 'soft' ? 'border-white/40 bg-white/20' : 'border-transparent'
      }`}
    >
      <svg width="32" height="32" viewBox="0 0 32 32" fill="none" aria-hidden="true">
        {children}
      </svg>
    </button>
  )
}

function Taskbar() {
  return (
    <div className="absolute right-4 bottom-0 left-0 flex h-[15px] items-start gap-[3px] overflow-hidden bg-[linear-gradient(#6d92b3_0_8px,#4e80aa_8px)] pl-[17px]">
      <TaskButton label="Chrome" active="soft">
        <circle cx="16" cy="17" r="15" fill="#4caf50" />
        <path d="M3 9a15 15 0 0 1 26 0l2 4H16l-8 8z" fill="#dd4b3e" />
        <circle cx="16" cy="17" r="7" fill="#fff" />
        <circle cx="16" cy="17" r="5.500" fill="#4a8af4" />
      </TaskButton>
      <TaskButton label="Esplora file">
        <path d="M2 5l2-3h8l2 3h16v25H1z" fill="#f7dd92" stroke="#c9a84a" />
        <path d="M5 4h4" stroke="#2da23c" strokeWidth="3" />
        <path d="M13 7h5" stroke="#d23b2c" strokeWidth="3" />
        <path d="M21 9h6" stroke="#3b95d6" strokeWidth="3" />
      </TaskButton>
      <TaskButton label="Internet Explorer">
        <circle cx="16" cy="18" r="12" stroke="#58bdf0" strokeWidth="6" />
        <path d="M2 22C6 8 20-2 28 2c3 2 1 6-1 9" stroke="#f6cf2d" strokeWidth="3" />
      </TaskButton>
      <TaskButton label="Giochi">
        <rect y="1" width="32" height="31" rx="5" fill="#2b2b2b" />
        <path d="M6 9l4-2 2 2 4-3 1 4 3 2-3 5H6l2-4z" fill="#e8235e" />
        <path d="M17 9l4-3 2 2 4-1v4l3 2-3 4-8-1z" fill="#f3b21b" />
      </TaskButton>
      <TaskButton label="Calcolatrice">
        <rect x="6" y="2" width="20" height="30" fill="#cfe6f6" stroke="#4b8fc4" />
        <path d="M8 5h16" stroke="#f0a63a" strokeWidth="3" />
        <rect x="8" y="8" width="16" height="10" fill="#eaf6ff" />
        <path d="M20 9.500h2v4h-2z" stroke="#4b8fc4" />
      </TaskButton>
      <TaskButton label="Documenti">
        <rect x="2" y="5" width="28" height="26" fill="#eef1f4" stroke="#888" />
        <path d="M2 6h28" stroke="#777" strokeWidth="2" strokeDasharray="18 1 2 1" />
        <path d="M5 10h11v6H5z" fill="#5f87ad" />
        <path d="M18 11h7M27 9v12" stroke="#35629a" strokeWidth="2" />
      </TaskButton>
      <TaskButton label="Media player">
        <path d="M5 7h20v24H5zM25 6v24M28 6v24" fill="#5aa9dc" stroke="#8ad0ee" />
        <circle cx="14" cy="17" r="9" fill="#f39a2e" />
        <path d="M11 12l8 5-8 5z" fill="#fff" />
      </TaskButton>
      <TaskButton label="MetaTrader" active="strong">
        <rect y="1" width="32" height="31" fill="#d8dadc" />
        <path d="M24 4h5L15 28 6 18l4-2 5 5z" fill="#164a75" />
      </TaskButton>
      <TaskButton label="ActivTrades" active="soft">
        <rect y="1" width="32" height="31" fill="#fff" />
        <path d="M22 5h5v22h-5zM12 11h8v4h-8z" fill="#d4122e" />
      </TaskButton>
      <time className="mt-[3px] mr-[40px] ml-auto text-[11px] leading-4 text-white">22.57</time>
    </div>
  )
}

function TitleBar() {
  return (
    <header className="relative flex h-[31px] items-start justify-between border-t border-[#4779a6] border-b border-b-[#4f86b5] bg-[#619fd3] pl-[10px]">
      <svg width="16" height="16" viewBox="0 0 16 16" className="mt-[6px]" aria-hidden="true">
        <rect width="16" height="16" fill="#d3d6d8" />
        <path d="M2 8l3-1 2 3 5-9h3L8 14H6z" fill="#113e63" />
      </svg>
      <h1 className="flex-1 pr-3 text-center text-[14px] leading-[29px] text-[#26333f]">
        1815674: Activtrades-Demo - Conto dimostrativo (demo) - [LCrudeApr19,Daily]
      </h1>
      <div className="absolute top-0 right-0 flex h-5 items-center">
        <button type="button" aria-label="Riduci a icona" className="flex h-5 w-7 items-center justify-center pt-[6px]">
          <span className="h-[2px] w-2 bg-[#222]" />
        </button>
        <button type="button" aria-label="Ingrandisci" className="flex h-5 w-[26px] items-center justify-center">
          <span className="h-2 w-[10px] border border-t-2 border-[#222]" />
        </button>
        <button type="button" aria-label="Chiudi" className="flex h-5 w-9 items-center justify-center bg-[#c75050] pl-[9px]">
          <svg width="8" height="7" viewBox="0 0 8 7" aria-hidden="true">
            <path d="M1 0l6 7M7 0L1 7" stroke="#fff" strokeWidth="2" />
          </svg>
        </button>
      </div>
    </header>
  )
}

function MenuBar() {
  return (
    <div className="flex h-[21px] items-center overflow-hidden border-b border-[#a0a0a0] pl-[5px]">
      <Icon size={14}>
        <rect x="1" y="1" width="12" height="10" fill="#fff" stroke="#4b8ad0" strokeWidth="1.500" />
        <rect x="4" y="6" width="13" height="11" fill="#fff" stroke="#4b8ad0" strokeWidth="1.500" />
        <path d="M6 13l2-3 2 4 2-4 3 3" stroke="#4b8ad0" />
      </Icon>
      <nav className="flex flex-1 gap-[18px] pl-[10px] text-[11px]" aria-label="Menu">
        {['File', 'Visualizza', 'Inserisci', 'Grafici', 'Strumenti', 'Finestra', 'Aiuto'].map((item) => (
          <button key={item} type="button">
            {item}
          </button>
        ))}
      </nav>
      <div className="-mr-[7px] flex gap-px">
        {['M4 10h6', 'M5.500 3.500h5v4h-5zM3.500 6.500h5v4h-5z', 'M4 4l6 6M10 4l-6 6'].map((d, i) => (
          <button
            key={d}
            type="button"
            aria-label={['Riduci grafico', 'Ripristina grafico', 'Chiudi grafico'][i]}
            className="flex size-[18px] items-center justify-center border border-[#8f9fb3] bg-[#dfecf8]"
          >
            <svg width="14" height="14" viewBox="0 0 14 14" fill="none" aria-hidden="true">
              <path d={d} stroke="#6f7e8f" strokeWidth={i === 1 ? 1 : 2} />
            </svg>
          </button>
        ))}
      </div>
    </div>
  )
}

export default function App() {
  return (
    <div className="relative flex h-screen flex-col overflow-hidden bg-white pr-4 font-['Open_Sans','Noto_Sans',sans-serif] text-black">
      <TitleBar />
      <div className="flex min-h-0 flex-1 flex-col border-l-8 border-[#619fd3] bg-[#f0f0f0]">
        <MenuBar />
        <MainToolbar />
        <LineToolbar />
        <div className="flex border-t-2 border-[#808080]">
          <aside className="flex w-[197px] shrink-0 flex-col bg-[#f0f0f0]">
            <DataWindow />
            <MarketWatch />
          </aside>
          <div className="flex min-w-0 flex-1 flex-col border-l-2 border-[#808080]">
            <Chart />
            <ChartTabs />
          </div>
        </div>
        <StatusBar />
      </div>
      <Taskbar />
    </div>
  )
}
